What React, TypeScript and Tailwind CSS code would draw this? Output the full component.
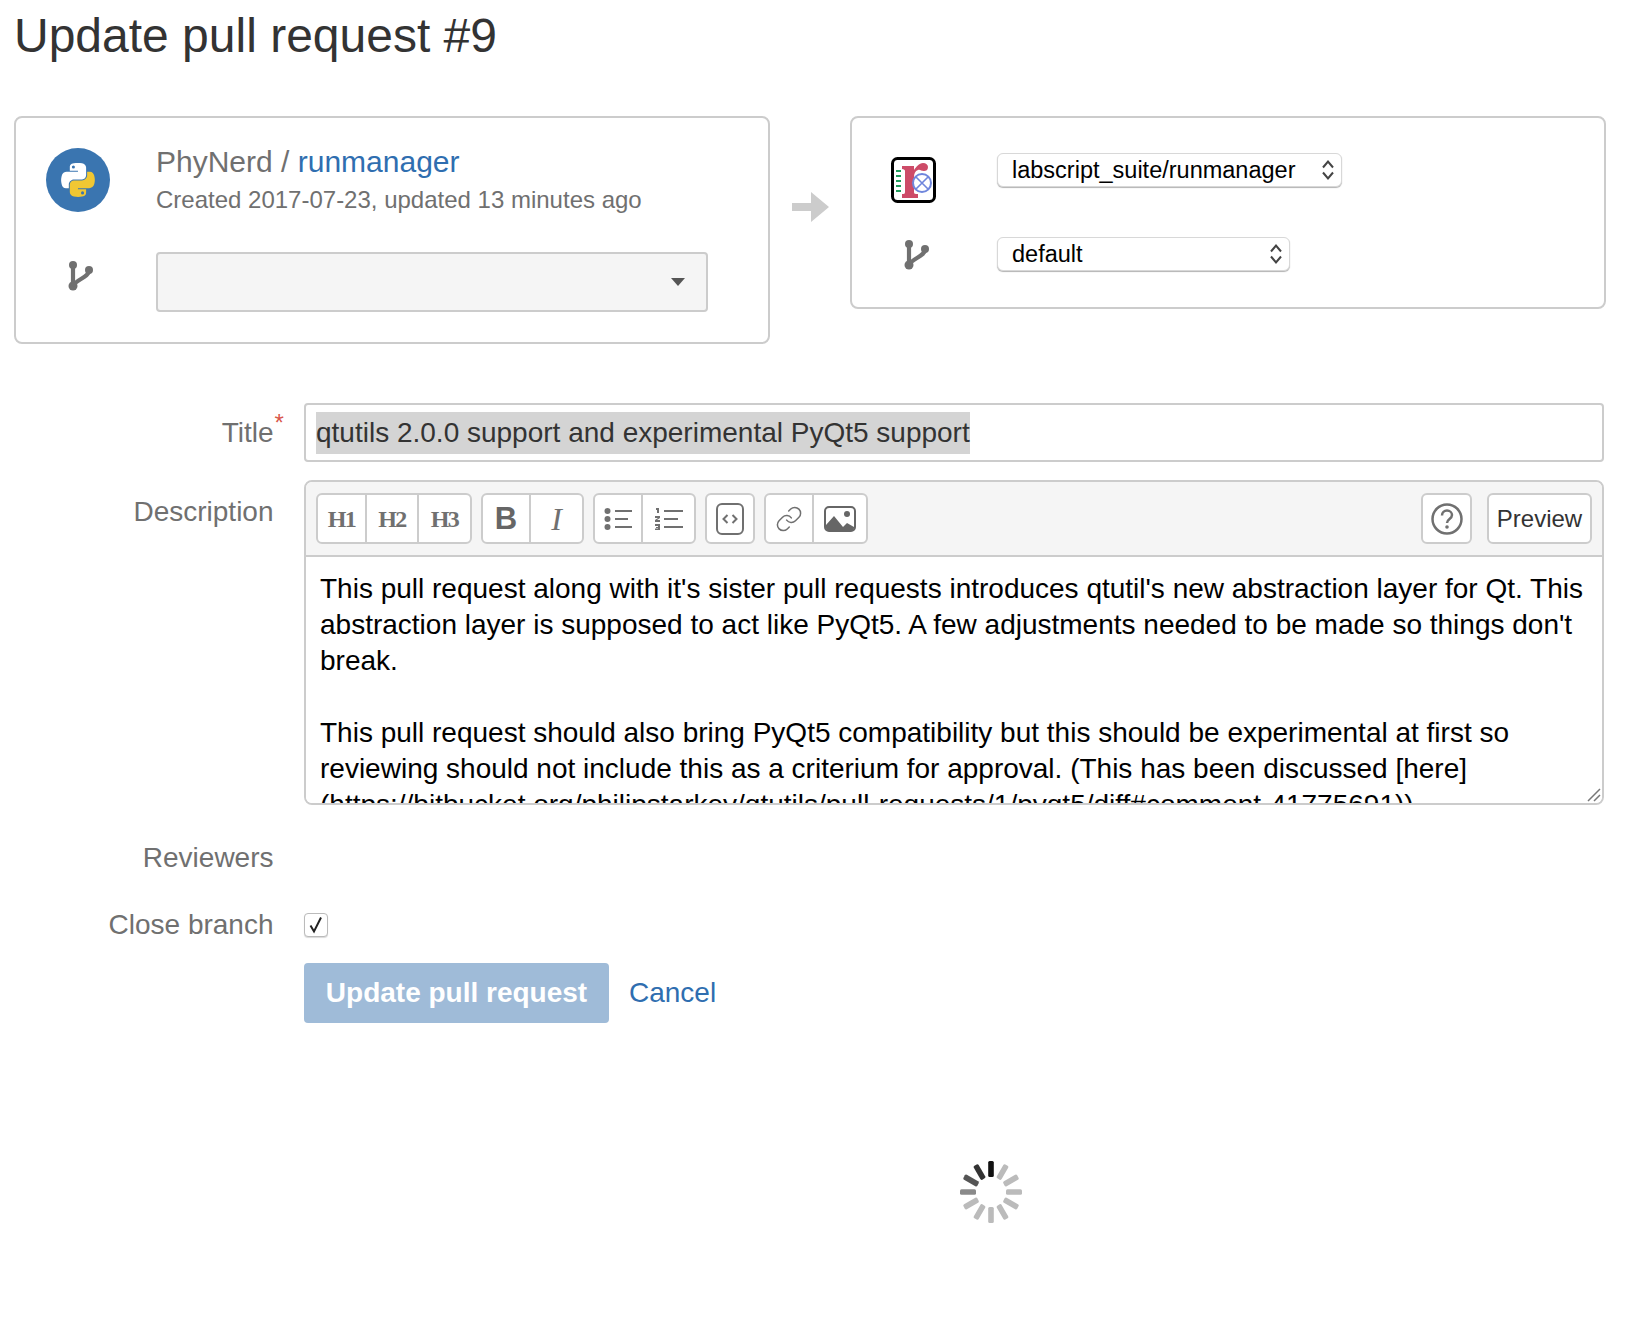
import { Link } from 'lucide-react';

const ink = '#707070';

function BranchIcon() {
  return (
    <svg width="27" height="31" viewBox="0 0 27 31" fill={ink} stroke={ink}>
      <circle cx="6" cy="5" r="4" stroke="none" />
      <circle cx="6" cy="26" r="4.500" stroke="none" />
      <circle cx="22" cy="10" r="4" stroke="none" />
      <path d="M6 5V26" strokeWidth="4.200" fill="none" />
      <path d="M22 10C22 18 9 19 6 26" strokeWidth="4.200" fill="none" />
    </svg>
  );
}

function PythonLogo() {
  const d =
    'M54.9 0C50.3 0 45.9.4 42.1 1.1 30.8 3.1 28.8 7.3 28.8 15v10.2h26.6v3.4H18.8c-7.7 0-14.5 4.6-16.6 13.5-2.4 10.1-2.6 16.4 0 27 1.9 7.9 6.4 13.5 14.1 13.5h9.2V70.4c0-8.8 7.6-16.6 16.7-16.6h26.5c7.4 0 13.3-6.1 13.3-13.5V15c0-7.2-6.1-12.6-13.3-13.8C64.1.4 59.5 0 54.9 0zM40.5 8.2a5 5 0 1 1 0 10 5 5 0 0 1 0-10z';
  return (
    <div className="flex h-16 w-16 items-center justify-center rounded-full bg-[#3a75b0]">
      <svg width="34" height="34" viewBox="0 0 111 111">
        <path d={d} fill="#fff" fillRule="evenodd" />
        <path d={d} fill="#f0c733" fillRule="evenodd" transform="rotate(180 55.4 55.4)" />
      </svg>
    </div>
  );
}

function RepoLogo() {
  return (
    <svg width="45" height="46" viewBox="0 0 45 46" className="shrink-0">
      <rect x="1.500" y="1.500" width="42" height="43" rx="5" fill="#fff" stroke="#000" strokeWidth="3" />
      <path d="M5 14h5M5 19h5M5 24h5M5 29h5M5 34h5" stroke="#1f9d5c" strokeWidth="2" />
      <path
        d="M11 9h12v4c2-3 5-7 9-7 3 0 5 2 5 4 0 3-2 4-4 4-3 0-4-2-6-1-3 1-4 4-4 7v15c0 2 1 2 4 2v4H11v-4c2 0 3 0 3-2V14c0-1-1-2-3-2z"
        fill="#cd4b68"
      />
      <circle cx="31" cy="26" r="9" fill="#fff" stroke="#6f86dc" strokeWidth="2" />
      <path d="M25 20l12 12M37 20L25 32" stroke="#6f86dc" strokeWidth="1.600" />
    </svg>
  );
}

function Chevrons() {
  return (
    <svg width="14" height="24" viewBox="0 0 14 24" fill="none" stroke="#444" strokeWidth="2">
      <path d="M2 9.500l5-6 5 6M2 14.500l5 6 5-6" />
    </svg>
  );
}

function NativeSelect({ label, className }: { label: string; className: string }) {
  return (
    <div
      className={`flex h-[34px] items-center justify-between rounded-[6px] border border-[#d8d8d8] bg-white pl-[14px] pr-[6px] text-[23.5px] text-black shadow-[0_1px_1px_rgba(0,0,0,0.3)] ${className}`}
    >
      <span className="pt-[2px]">{label}</span>
      <Chevrons />
    </div>
  );
}

function ToolGroup({ children }: { children: React.ReactNode }) {
  return (
    <div className="flex h-[51px] divide-x-2 divide-[#ccc] overflow-hidden rounded-[6px] border-2 border-[#ccc] bg-white text-[#707070]">
      {children}
    </div>
  );
}

function ToolBtn({ w, children }: { w: string; children: React.ReactNode }) {
  return <div className={`flex h-full items-center justify-center ${w}`}>{children}</div>;
}

function Heading({ n }: { n: number }) {
  return <span className="font-['Liberation_Serif',serif] text-[24px] font-bold tracking-[-1.5px]">H{n}</span>;
}

function Label({ children, className = '' }: { children: React.ReactNode; className?: string }) {
  return <div className={`w-[259.5px] shrink-0 text-right text-[28px] text-[#707070] ${className}`}>{children}</div>;
}

function Spinner() {
  const bars = [
    { a: 0, c: '#111' },
    { a: 30, c: '#bbb' },
    { a: 60, c: '#bbb' },
    { a: 90, c: '#bbb' },
    { a: 120, c: '#bbb' },
    { a: 150, c: '#bbb' },
    { a: 180, c: '#bbb' },
    { a: 210, c: '#bbb' },
    { a: 240, c: '#bbb' },
    { a: 270, c: '#8a8a8a' },
    { a: 300, c: '#555' },
    { a: 330, c: '#333' },
  ];
  return (
    <svg width="64" height="64" viewBox="-32 -32 64 64" className="blur-[0.6px]">
      {bars.map((b) => (
        <rect key={b.a} x="-2.800" y="-31" width="5.600" height="16" rx="1.500" fill={b.c} transform={`rotate(${b.a})`} />
      ))}
    </svg>
  );
}

export default function App() {
  const description = `This pull request along with it's sister pull requests introduces qtutil's new abstraction layer for Qt. This abstraction layer is supposed to act like PyQt5. A few adjustments needed to be made so things don't break.

This pull request should also bring PyQt5 compatibility but this should be experimental at first so reviewing should not include this as a criterium for approval. (This has been discussed [here](https://bitbucket.org/philipstarkey/qtutils/pull-requests/1/pyqt5/diff#comment-41775691))`;

  return (
    <div className="h-[1322px] overflow-hidden bg-white pl-[14px] pr-[28px] font-['Liberation_Sans',Arial,sans-serif]">
      <h1 className="h-[116px] pt-[7px] text-[48px] leading-[58px] text-[#333]">Update pull request #9</h1>

      <div className="flex items-start">
        <div className="flex h-[228px] w-[756px] rounded-[8px] border-2 border-[#ccc] pl-[30px] pt-[30px]">
          <div className="w-[80px] shrink-0">
            <PythonLogo />
            <div className="mt-[48px] pl-[21px]">
              <BranchIcon />
            </div>
          </div>
          <div className="ml-[30px] -mt-[3px]">
            <div className="text-[30px] leading-[34px] text-[#707070]">
              PhyNerd / <span className="text-[#2f6eb0]">runmanager</span>
            </div>
            <div className="mt-[6px] text-[24px] leading-[30px] text-[#707070]">
              Created 2017-07-23, updated 13 minutes ago
            </div>
            <div className="mt-[37px] flex h-[60px] w-[552px] items-center justify-end rounded-[4px] border-2 border-[#ccc] bg-[#f5f5f5] pr-[21px]">
              <div className="h-0 w-0 border-x-[7px] border-t-[8px] border-x-transparent border-t-[#555]" />
            </div>
          </div>
        </div>

        <div className="flex w-[80px] justify-center pt-[76px]">
          <svg width="37" height="30" viewBox="0 0 37 30" fill="#ccc">
            <path d="M0 11h19V0l18 15-18 15V19H0z" />
          </svg>
        </div>

        <div className="flex h-[193px] w-[756px] flex-col gap-[50px] rounded-[8px] border-2 border-[#ccc] pl-[39px] pt-[35px]">
          <div className="flex h-[34px] items-start">
            <div className="mt-[4px] flex w-[106px] shrink-0">
              <RepoLogo />
            </div>
            <NativeSelect label="labscript_suite/runmanager" className="w-[345px]" />
          </div>
          <div className="flex h-[34px] items-start">
            <div className="mt-[2px] w-[106px] shrink-0 pl-[12px]">
              <BranchIcon />
            </div>
            <NativeSelect label="default" className="w-[293px]" />
          </div>
        </div>
      </div>

      <div className="mt-[59px] flex items-start gap-[30.5px]">
        <Label className="pt-[9px]">
          <span className="relative">
            Title
            <span className="absolute -top-[12px] left-full ml-[1px] text-[24px] text-[#d9574b]">*</span>
          </span>
        </Label>
        <div className="flex h-[59px] w-[1300px] items-center rounded-[4px] border-2 border-[#ccc] pl-[10px] text-[28px] text-[#333]">
          <span className="bg-[#d4d4d4]">qtutils 2.0.0 support and experimental PyQt5 support</span>
        </div>
      </div>

      <div className="mt-[18px] flex items-start gap-[30.5px]">
        <Label className="pt-[11px]">Description</Label>
        <div className="relative w-[1300px] overflow-hidden rounded-[8px] border-2 border-[#ccc]">
          <div className="flex h-[75px] items-center gap-[9px] border-b-2 border-[#ccc] bg-[#f5f5f5] pl-[10px] pr-[10px]">
            <ToolGroup>
              <ToolBtn w="w-[49px]"><Heading n={1} /></ToolBtn>
              <ToolBtn w="w-[52px]"><Heading n={2} /></ToolBtn>
              <ToolBtn w="w-[51px]"><Heading n={3} /></ToolBtn>
            </ToolGroup>
            <ToolGroup>
              <ToolBtn w="w-[48px]">
                <span className="text-[31px] font-bold leading-none text-[#666]">B</span>
              </ToolBtn>
              <ToolBtn w="w-[51px]">
                <span className="font-['Liberation_Serif',serif] text-[32px] italic leading-none">I</span>
              </ToolBtn>
            </ToolGroup>
            <ToolGroup>
              <ToolBtn w="w-[48px]">
                <svg width="28" height="24" viewBox="0 0 28 24" fill="#707070">
                  <circle cx="3.500" cy="4" r="3" />
                  <circle cx="3.500" cy="12" r="3" />
                  <circle cx="3.500" cy="20" r="3" />
                  <rect x="11" y="3" width="17" height="2" />
                  <rect x="11" y="11" width="13" height="2" />
                  <rect x="11" y="19" width="17" height="2" />
                </svg>
              </ToolBtn>
              <ToolBtn w="w-[51px]">
                <svg width="28" height="24" viewBox="0 0 28 24" fill="#707070">
                  <path d="M1 1h3v5H2V3H1zM0 9h5v2l-3 2h3v2H0v-2l3-2H0zM0 17h5v6H0v-1.500h3V21H1v-1h2v-1H0z" />
                  <rect x="9" y="3" width="19" height="2" />
                  <rect x="9" y="11" width="14" height="2" />
                  <rect x="9" y="19" width="19" height="2" />
                </svg>
              </ToolBtn>
            </ToolGroup>
            <ToolGroup>
              <ToolBtn w="w-[46px]">
                <svg width="28" height="32" viewBox="0 0 28 32" fill="none" stroke="#707070">
                  <rect x="1" y="1" width="26" height="30" rx="5" strokeWidth="2" />
                  <path d="M11.500 12l-4 4 4 4M16.500 12l4 4-4 4" strokeWidth="2" />
                </svg>
              </ToolBtn>
            </ToolGroup>
            <ToolGroup>
              <ToolBtn w="w-[48px]">
                <Link size={28} strokeWidth={1.300} />
              </ToolBtn>
              <ToolBtn w="w-[52px]">
                <svg width="32" height="26" viewBox="0 0 32 26">
                  <rect x="1" y="1" width="30" height="24" rx="4" fill="#fff" stroke="#666" strokeWidth="2" />
                  <circle cx="23" cy="8" r="3" fill="#666" />
                  <path d="M2 19l8-9 9 11 4-4 7 4v1a3 3 0 0 1-3 3H5a3 3 0 0 1-3-3z" fill="#666" />
                </svg>
              </ToolBtn>
            </ToolGroup>
            <div className="ml-auto flex h-[51px] w-[51px] items-center justify-center rounded-[6px] border-2 border-[#ccc] bg-white">
              <svg width="32" height="32" viewBox="0 0 32 32" fill="none" stroke="#707070">
                <circle cx="16" cy="16" r="14.500" strokeWidth="2.500" />
                <path d="M11 12.500c0-3 2.300-5 5-5s5 2 5 4.500c0 4-5 4-5 8" strokeWidth="2.500" />
                <circle cx="16" cy="24" r="1.800" fill="#707070" stroke="none" />
              </svg>
            </div>
            <div className="ml-[6px] flex h-[51px] w-[105px] items-center justify-center rounded-[6px] border-2 border-[#ccc] bg-white text-[24px] text-[#333]">
              Preview
            </div>
          </div>
          <textarea
            readOnly
            value={description}
            className="block h-[246px] w-full resize-none overflow-hidden bg-white pl-[14px] pr-[14px] pt-[14px] text-[28px] leading-[36px] text-black outline-none"
          />
          <svg width="14" height="14" viewBox="0 0 14 14" fill="none" stroke="#777" strokeWidth="1.500" className="absolute bottom-[1px] right-[1px]">
            <path d="M1 13L13 1M7 13l6-6" />
          </svg>
        </div>
      </div>

      <div className="mt-[37px] flex gap-[30.5px]">
        <Label className="leading-[32px]">Reviewers</Label>
      </div>

      <div className="mt-[35px] flex items-center gap-[30.5px]">
        <Label className="leading-[32px]">Close branch</Label>
        <div className="flex h-[24px] w-[24px] items-center justify-center rounded-[4px] border border-[#bbb] bg-white shadow-[0_1px_1px_rgba(0,0,0,0.15)]">
          <svg width="16" height="18" viewBox="0 0 16 18" fill="none" stroke="#222" strokeWidth="2">
            <path d="M2.500 9.500l3.500 6 7-14" />
          </svg>
        </div>
      </div>

      <div className="mt-[22px] flex items-center pl-[290px]">
        <div className="flex h-[60px] w-[305px] items-center justify-center rounded-[4px] bg-[#9fbbd8] text-[28px] font-bold text-white">
          Update pull request
        </div>
        <span className="ml-[20px] text-[28px] text-[#2f6eb0]">Cancel</span>
      </div>

      <div className="mt-[137px] pl-[945px]">
        <Spinner />
      </div>
    </div>
  );
}
